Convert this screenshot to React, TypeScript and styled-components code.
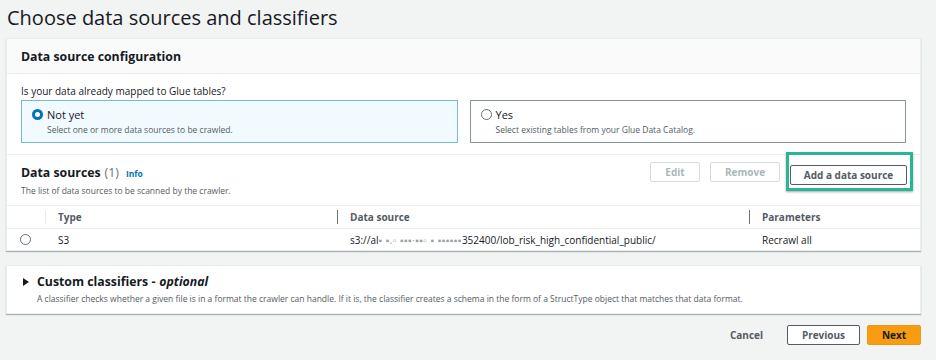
import styled, { createGlobalStyle } from 'styled-components'

const GlobalStyle = createGlobalStyle`
  body {
    margin: 0;
    background: #f2f3f3;
    font-family: 'Open Sans', 'Liberation Sans', sans-serif;
    color: #16191f;
  }
`

const Page = styled.div`
  width: 936px;
  height: 360px;
  padding: 0 15px 0 6px;
  box-sizing: border-box;
  overflow: hidden;
`

const Title = styled.h1`
  margin: 4px 0 0 1px;
  height: 34px;
  font-size: 20px;
  font-weight: 400;
  line-height: 28px;
`

const Card = styled.section<{ $gap?: number }>`
  background: #fff;
  border: 1px solid #eaeded;
  box-shadow: 0 1px 1px rgba(0, 28, 36, 0.3);
  margin-bottom: ${(p) => p.$gap ?? 0}px;
`

const CardHeader = styled.div`
  height: 34px;
  display: flex;
  align-items: center;
  padding: 0 14px;
  background: #fafafa;
  border-bottom: 1px solid #eaeded;
  font-size: 12.3px;
  font-weight: 700;
`

const CardBody = styled.div`
  padding: 9px 14px 11px;
`

const Label = styled.div`
  font-size: 10px;
  line-height: 16px;
  margin-bottom: 1px;
`

const Tiles = styled.div`
  display: grid;
  grid-template-columns: 1fr 1fr;
  gap: 12px;
`

const Tile = styled.div<{ $active?: boolean }>`
  height: 43px;
  box-sizing: border-box;
  border: 1px solid ${(p) => (p.$active ? '#7bb6df' : '#879596')};
  background: ${(p) => (p.$active ? '#f1faff' : '#fff')};
  padding: 5px 10px 6px;
  display: grid;
  grid-template-columns: 15px 1fr;
  align-items: center;
`

const Radio = styled.span<{ $checked?: boolean }>`
  width: 11px;
  height: 11px;
  box-sizing: border-box;
  border-radius: 50%;
  border: ${(p) => (p.$checked ? '3.5px solid #0073bb' : '1px solid #687078')};
  background: #fff;
  display: inline-block;
`

const TileTitle = styled.span`
  font-size: 11px;
  line-height: 16px;
`

const TileDesc = styled.span`
  grid-column: 2;
  font-size: 8.5px;
  line-height: 12px;
  color: #545b64;
`

const SectionHead = styled.div`
  border-top: 1px solid #eaeded;
  display: flex;
  align-items: flex-start;
  justify-content: space-between;
  padding: 7px 14px 0;
  height: 43px;
`

const HeadText = styled.div`
  padding-top: 3px;
`

const HeadTitle = styled.div`
  font-size: 12.3px;
  font-weight: 700;
  line-height: 16px;
  display: flex;
  align-items: baseline;
  gap: 4px;
`

const Count = styled.span`
  font-weight: 400;
  color: #687078;
`

const Info = styled.span`
  font-size: 8.5px;
  font-weight: 700;
  color: #0073bb;
  margin-left: 3px;
`

const HeadDesc = styled.div`
  font-size: 8.5px;
  line-height: 12px;
  color: #545b64;
  margin-top: 3px;
`

const Actions = styled.div`
  display: flex;
  align-items: flex-start;
  gap: 10px;
`

const Button = styled.button<{ $w: number; $disabled?: boolean; $primary?: boolean }>`
  width: ${(p) => p.$w}px;
  height: 20px;
  box-sizing: border-box;
  font-family: inherit;
  font-size: 10px;
  font-weight: 700;
  padding: 0;
  border: 1px solid ${(p) => (p.$disabled ? '#d5dbdb' : p.$primary ? '#ec9a0d' : '#545b64')};
  background: ${(p) => (p.$primary ? '#f99c11' : '#fff')};
  color: ${(p) => (p.$disabled ? '#aab7b8' : p.$primary ? '#16191f' : '#545b64')};
  border-radius: 2px;
`

const Highlight = styled.div`
  border: 3px solid #2bb495;
  padding: 7px 3px 3px 1px;
  margin: -10px -7px 0 -4px;
  box-shadow: 0 1px 2px rgba(0, 0, 0, 0.35);
`

const Table = styled.div`
  display: grid;
  grid-template-columns: 38px 292px 412px 1fr;
`

const HeadCell = styled.div<{ $divider?: string }>`
  height: 22px;
  border-top: 1px solid #eaeded;
  border-bottom: 1px solid #eaeded;
  display: flex;
  align-items: center;
  position: relative;
  padding-left: 13px;
  font-size: 10px;
  font-weight: 700;
  color: #545b64;
  &::before {
    content: '';
    display: ${(p) => (p.$divider ? 'block' : 'none')};
    position: absolute;
    left: 0;
    top: 4px;
    bottom: 4px;
    width: 1px;
    background: ${(p) => p.$divider};
  }
`

const Cell = styled.div`
  height: 21px;
  display: flex;
  align-items: center;
  padding-left: 13px;
  font-size: 10px;
  white-space: nowrap;
`

const Blur = styled.span`
  color: #9aa0a4;
  letter-spacing: 0.5px;
`

const Expander = styled.div`
  padding: 8px 15px 8px;
`

const ExpTitle = styled.div`
  display: flex;
  align-items: center;
  gap: 8px;
  font-size: 12.3px;
  font-weight: 700;
  line-height: 16px;
  em {
    font-style: italic;
    margin-left: 4px;
  }
`

const Caret = styled.span`
  width: 0;
  height: 0;
  border-top: 4px solid transparent;
  border-bottom: 4px solid transparent;
  border-left: 6px solid #16191f;
  margin-left: 1px;
`

const ExpDesc = styled.div`
  font-size: 8.5px;
  line-height: 12px;
  color: #545b64;
  margin-top: 3px;
  padding-left: 15px;
`

const Footer = styled.div`
  display: flex;
  justify-content: flex-end;
  align-items: center;
  gap: 7px;
`

const LinkButton = styled.span`
  font-size: 10px;
  font-weight: 700;
  color: #545b64;
  margin-right: 17px;
`

export default function App() {
  return (
    <Page>
      <GlobalStyle />
      <Title>Choose data sources and classifiers</Title>
      <Card $gap={14}>
        <CardHeader>Data source configuration</CardHeader>
        <CardBody>
          <Label>Is your data already mapped to Glue tables?</Label>
          <Tiles>
            <Tile $active>
              <Radio $checked />
              <TileTitle>Not yet</TileTitle>
              <TileDesc>Select one or more data sources to be crawled.</TileDesc>
            </Tile>
            <Tile>
              <Radio />
              <TileTitle>Yes</TileTitle>
              <TileDesc>Select existing tables from your Glue Data Catalog.</TileDesc>
            </Tile>
          </Tiles>
        </CardBody>
        <SectionHead>
          <HeadText>
            <HeadTitle>
              Data sources <Count>(1)</Count>
              <Info>Info</Info>
            </HeadTitle>
            <HeadDesc>The list of data sources to be scanned by the crawler.</HeadDesc>
          </HeadText>
          <Actions>
            <Button $w={50} $disabled>Edit</Button>
            <Button $w={70} $disabled>Remove</Button>
            <Highlight>
              <Button $w={117}>Add a data source</Button>
            </Highlight>
          </Actions>
        </SectionHead>
        <Table>
          <HeadCell />
          <HeadCell $divider="#eaeded">Type</HeadCell>
          <HeadCell $divider="#687078">Data source</HeadCell>
          <HeadCell $divider="#687078">Parameters</HeadCell>
          <Cell>
            <Radio />
          </Cell>
          <Cell>S3</Cell>
          <Cell>
            s3://al<Blur>▪ ▪.▫ ▪▪▪·▪▪▫ ▪ ▪▪▪▪▪▪</Blur>352400/lob_risk_high_confidential_public/
          </Cell>
          <Cell>Recrawl all</Cell>
        </Table>
      </Card>
      <Card $gap={11}>
        <Expander>
          <ExpTitle>
            <Caret />
            <span>
              Custom classifiers -<em>optional</em>
            </span>
          </ExpTitle>
          <ExpDesc>
            A classifier checks whether a given file is in a format the crawler can handle. If it is, the classifier
            creates a schema in the form of a StructType object that matches that data format.
          </ExpDesc>
        </Expander>
      </Card>
      <Footer>
        <LinkButton>Cancel</LinkButton>
        <Button $w={73}>Previous</Button>
        <Button $w={54} $primary>Next</Button>
      </Footer>
    </Page>
  )
}
